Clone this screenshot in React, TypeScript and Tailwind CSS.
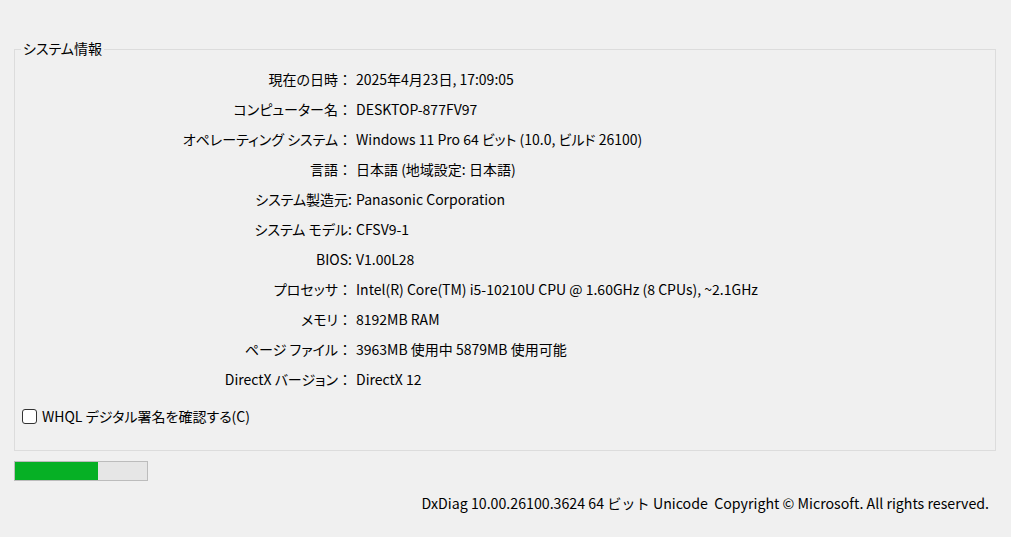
const rows: [string, string, boolean][] = [
  ['現在の日時', '2025年4月23日, 17:09:05', true],
  ['コンピューター名', 'DESKTOP-877FV97', true],
  ['オペレーティング システム', 'Windows 11 Pro 64 ビット (10.0, ビルド 26100)', true],
  ['言語', '日本語 (地域設定: 日本語)', true],
  ['システム製造元', 'Panasonic Corporation', false],
  ['システム モデル', 'CFSV9-1', false],
  ['BIOS', 'V1.00L28', false],
  ['プロセッサ', 'Intel(R) Core(TM) i5-10210U CPU @ 1.60GHz (8 CPUs), ~2.1GHz', true],
  ['メモリ', '8192MB RAM', true],
  ['ページ ファイル', '3963MB 使用中 5879MB 使用可能', true],
  ['DirectX バージョン', 'DirectX 12', true],
];

export default function App() {
  return (
    <div className="w-[1011px] h-[537px] bg-[#f0f0f0] text-[#000] text-[14px] overflow-hidden pt-[49px] pl-[14px] font-['Noto_Sans_CJK_JP','Noto_Sans',sans-serif] [font-feature-settings:'palt']">
      <fieldset className="relative w-[982px] h-[402px] border border-[#dcdcdc] pt-[14px]">
        <span className="absolute left-[6px] -top-[12px] bg-[#f0f0f0] px-[2px] leading-[20px]">システム情報</span>
        <div className="flex flex-col">
          {rows.map(([k, v, wide]) => (
            <div key={k} className="flex h-[30px] items-center">
              <div className="w-[337px] text-right whitespace-nowrap">
                {k}
                {wide ? <span className="[font-feature-settings:normal]">：</span> : ':'}
              </div>
              <div className="pl-[4px] whitespace-nowrap">{v}</div>
            </div>
          ))}
        </div>
        <label className="flex items-center mt-[12px] ml-[7px] gap-[5px]">
          <span className="w-[15px] h-[15px] border border-[#333] rounded-[3px] bg-white" />
          <span>WHQL デジタル署名を確認する(C)</span>
        </label>
      </fieldset>
      <div className="mt-[10px] w-[134px] h-[20px] border border-[#bcbcbc] bg-[#e6e6e6]">
        <div className="h-full w-[83px] bg-[#06b025]" />
      </div>
      <div className="mt-[12px] w-[975px] text-right whitespace-nowrap text-[14.2px] [font-feature-settings:normal]">
        DxDiag 10.00.26100.3624 64 ビット Unicode&nbsp;&nbsp;Copyright © Microsoft. All rights reserved.
      </div>
    </div>
  );
}
